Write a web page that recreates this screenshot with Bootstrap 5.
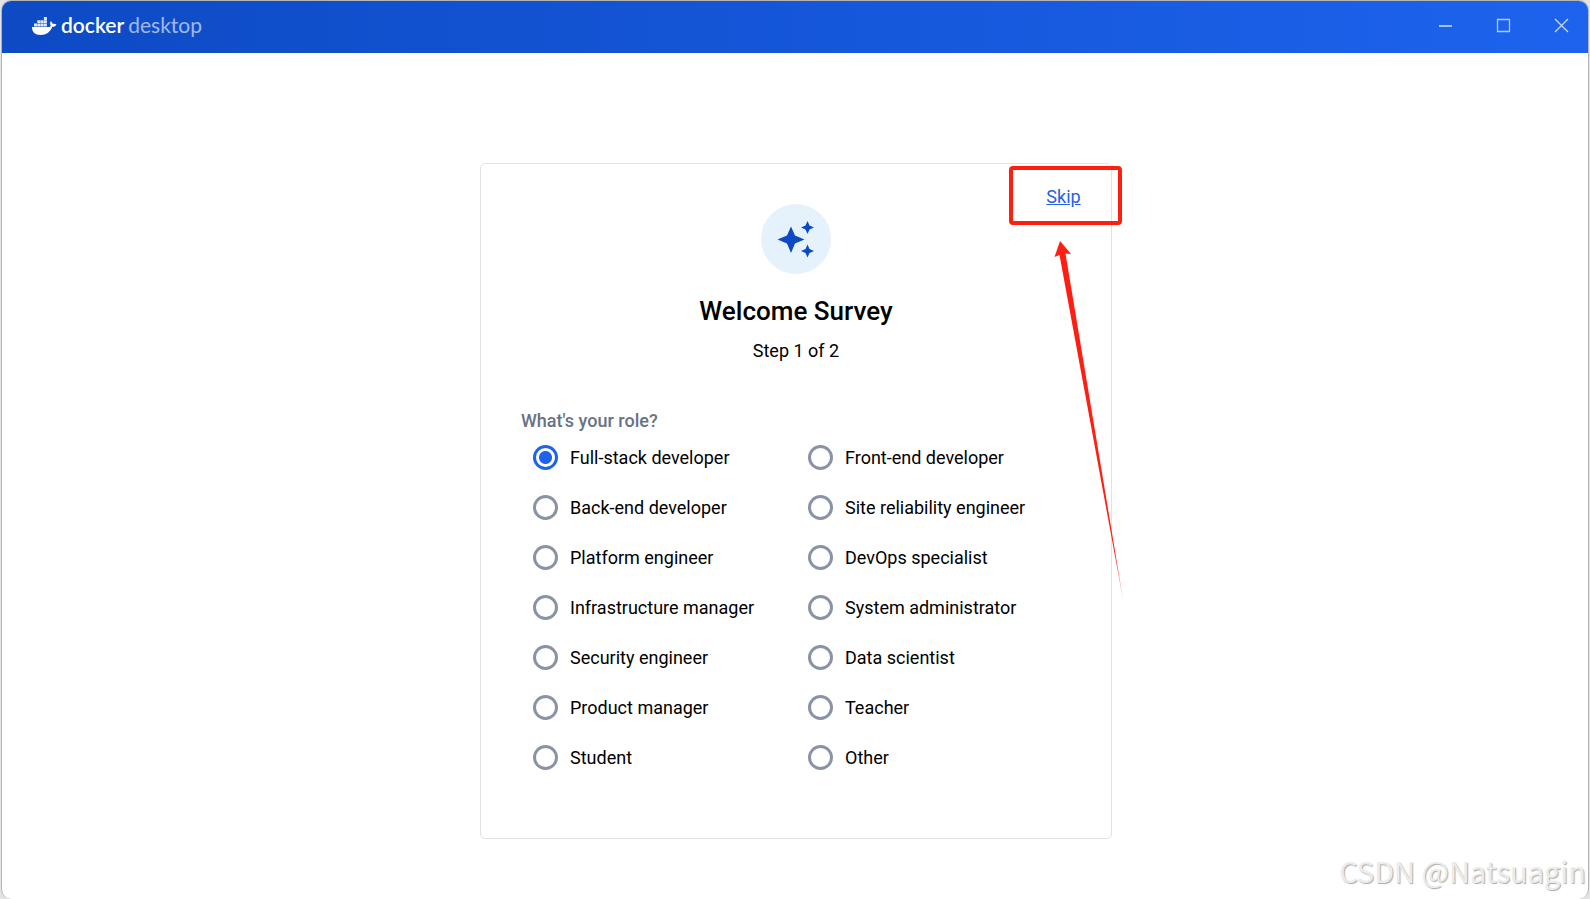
<!DOCTYPE html>
<html lang="en">
<head>
<meta charset="utf-8">
<meta name="viewport" content="width=device-width, initial-scale=1">
<title>Docker Desktop</title>
<link href="https://cdn.jsdelivr.net/npm/bootstrap@5.3.0/dist/css/bootstrap.min.css" rel="stylesheet">
<style>
  body { background: #e4e4e4; font-family: Roboto, "Liberation Sans", sans-serif; font-size: 18px; line-height: 24px; color: #000; }
  .app-window { min-height: 100vh; margin: 0 1px; border: 1px solid #b4b4b4; border-bottom: 0; border-radius: 10px; background: #fff; }
  .title-bar { height: 52px; padding: 0 14px 2px 30px; background: linear-gradient(90deg, #0d4ac4, #1d63ed); }
  .brand { font-family: Lato, sans-serif; font-size: 21px; line-height: 24px; gap: 4px; padding-bottom: 2px; }
  .brand svg { margin-top: 2px; }
  .brand-main { font-weight: 600; }
  .brand-sub { opacity: .6; }
  .win-controls { gap: 34px; }
  .win-btn { width: 24px; height: 24px; }
  .survey-area { padding: 110px 16px 60px 18px; }
  .survey { width: 632px; max-width: 100%; min-height: 676px; padding: 40px; border: 1px solid #e1e2e6; border-radius: 5px; }
  .spark { width: 70px; height: 70px; background: #e5f2fc; }
  .survey-title { font-size: 26px; line-height: 32px; margin: 21px 0 12px; }
  .role-label { color: #677285; font-size: 18px; line-height: 24px; font-weight: 500; margin-top: 46px; margin-bottom: 0; }
  .roles { display: grid; grid-template-columns: 1fr 1fr; padding-left: 12px; margin-right: -12px; }
  .role { height: 50px; gap: 12px; }
  .roles .form-check-input { width: 25px; height: 25px; margin: 0 0 1px; border: 3px solid #8993a5; box-shadow: none; background-image: none; }
  .roles .form-check-input:checked { background: radial-gradient(circle, #1d63ed 6px, #fff 7px); border-color: #1d63ed; }
  .skip-mark { top: 2px; right: -11px; width: 113px; height: 59px; padding: 2px 4px 0 0; border: 4px solid #ff1f12; border-radius: 4px; }
  .skip-mark a { color: #2560e8; }
  .arrow { top: 76px; right: -15px; }
  .watermark { right: 2px; bottom: 9px; font: 29px/40px "Noto Sans CJK SC", sans-serif; color: #ececec; text-shadow: 1px 1px 1px #aaa; }
</style>
</head>
<body>
<div class="app-window d-flex flex-column position-relative overflow-hidden">
  <header class="title-bar d-flex align-items-center justify-content-between text-white">
    <div class="brand d-flex align-items-center">
      <svg width="25" height="19" viewBox="0 0 25 19" fill="#fff" aria-hidden="true">
        <path d="M0 10H17.500C18.600 9.600 18.800 9 18.500 8C17.900 6.500 18.100 5.300 18.800 4.200C20 5 20.500 6 20.500 7C22 6.600 23.300 6.800 24.500 7.500C23.700 9.200 22.300 9.900 20.300 9.800C18.200 15.300 14.200 18 8.700 18C2.900 18 0 15.200 0 10Z"/>
        <path d="M2 6.500h3v3H2zM5.300 6.500h3v3h-3zM8.600 6.500h3v3h-3zM11.900 6.500h3v3h-3zM5.300 3.300h3v2.800h-3zM8.600 3.300h3v2.800h-3zM11.900 3.300h3v2.800h-3zM11.900 0h3v2.900h-3z" opacity=".88"/>
      </svg>
      <span class="brand-main">docker</span>
      <span class="brand-sub">desktop</span>
    </div>
    <div class="win-controls d-flex">
      <button type="button" class="win-btn btn p-0 border-0 d-flex" aria-label="Minimize"><svg width="24" height="24"><path d="M5 12h13" stroke="#a5c1f8" stroke-width="2"/></svg></button>
      <button type="button" class="win-btn btn p-0 border-0 d-flex" aria-label="Maximize"><svg width="24" height="24"><path d="M5.500 5.500h12v12h-12z" fill="none" stroke="#b4cbf9" stroke-width="1.300"/></svg></button>
      <button type="button" class="win-btn btn p-0 border-0 d-flex" aria-label="Close"><svg width="24" height="24"><path d="M5 5l13 13M18 5L5 18" stroke="#c4d6fb" stroke-width="1.300"/></svg></button>
    </div>
  </header>

  <main class="survey-area d-flex justify-content-center">
    <form class="survey position-relative">
      <div class="d-flex flex-column align-items-center">
        <div class="spark rounded-circle d-flex align-items-center justify-content-center">
          <svg width="38" height="38" viewBox="0 0 38 38" fill="#0c49c2" aria-hidden="true">
            <path d="M14 6.500L18 15.500L27.500 19.500L18 23.500L14 33L10 23.500L0.500 19.500L10 15.500Z"/>
            <path d="M30.500 1L32.500 5.500L37 7.500L32.500 9.500L30.500 14L28.500 9.500L24 7.500L28.500 5.500Z"/>
            <path d="M30.500 24.500L32.500 29L37 31L32.500 33L30.500 37.500L28.500 33L24 31L28.500 29Z"/>
          </svg>
        </div>
        <h1 class="survey-title fw-medium">Welcome Survey</h1>
        <div>Step 1 of 2</div>
      </div>
      <fieldset>
        <legend class="role-label" id="role-label">What's your role?</legend>
        <div class="roles" role="radiogroup" aria-labelledby="role-label">
          <div class="role d-flex align-items-center"><input class="form-check-input" type="radio" name="role" id="r1" checked><label for="r1">Full-stack developer</label></div>
          <div class="role d-flex align-items-center"><input class="form-check-input" type="radio" name="role" id="r2"><label for="r2">Front-end developer</label></div>
          <div class="role d-flex align-items-center"><input class="form-check-input" type="radio" name="role" id="r3"><label for="r3">Back-end developer</label></div>
          <div class="role d-flex align-items-center"><input class="form-check-input" type="radio" name="role" id="r4"><label for="r4">Site reliability engineer</label></div>
          <div class="role d-flex align-items-center"><input class="form-check-input" type="radio" name="role" id="r5"><label for="r5">Platform engineer</label></div>
          <div class="role d-flex align-items-center"><input class="form-check-input" type="radio" name="role" id="r6"><label for="r6">DevOps specialist</label></div>
          <div class="role d-flex align-items-center"><input class="form-check-input" type="radio" name="role" id="r7"><label for="r7">Infrastructure manager</label></div>
          <div class="role d-flex align-items-center"><input class="form-check-input" type="radio" name="role" id="r8"><label for="r8">System administrator</label></div>
          <div class="role d-flex align-items-center"><input class="form-check-input" type="radio" name="role" id="r9"><label for="r9">Security engineer</label></div>
          <div class="role d-flex align-items-center"><input class="form-check-input" type="radio" name="role" id="r10"><label for="r10">Data scientist</label></div>
          <div class="role d-flex align-items-center"><input class="form-check-input" type="radio" name="role" id="r11"><label for="r11">Product manager</label></div>
          <div class="role d-flex align-items-center"><input class="form-check-input" type="radio" name="role" id="r12"><label for="r12">Teacher</label></div>
          <div class="role d-flex align-items-center"><input class="form-check-input" type="radio" name="role" id="r13"><label for="r13">Student</label></div>
          <div class="role d-flex align-items-center"><input class="form-check-input" type="radio" name="role" id="r14"><label for="r14">Other</label></div>
        </div>
      </fieldset>

      <!-- Skip link with its highlight frame and pointer -->
      <div class="skip-mark position-absolute d-flex align-items-center justify-content-center"><a href="#">Skip</a></div>
      <svg class="arrow position-absolute pe-none" width="80" height="366" viewBox="0 0 80 366" aria-hidden="true">
        <defs><linearGradient id="fade" x1="0" y1="0" x2="0" y2="1"><stop offset=".85" stop-color="#ff1f12"/><stop offset="1" stop-color="#ff1f12" stop-opacity=".3"/></linearGradient></defs>
        <path d="M14 1L25 14L19.500 13.500L78 365L13.500 15L8.500 17Z" fill="url(#fade)"/>
      </svg>
    </form>
  </main>
  <div class="watermark position-absolute pe-none">CSDN @Natsuagin</div>
</div>
<script src="https://cdn.jsdelivr.net/npm/bootstrap@5.3.0/dist/js/bootstrap.bundle.min.js"></script>
</body>
</html>
